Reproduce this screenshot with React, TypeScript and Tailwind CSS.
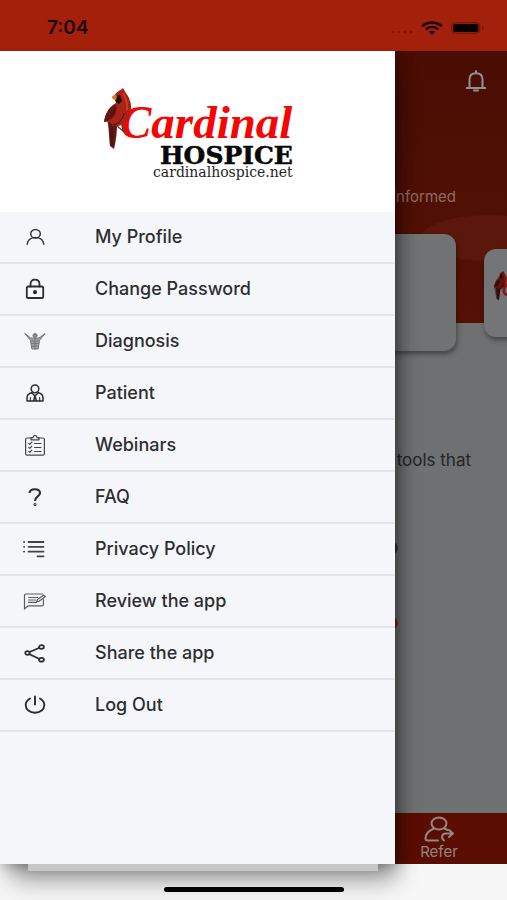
import type { ReactNode } from "react";

type IconProps = { children: ReactNode; width?: number; color?: string };

function Icon({ children, width = 1.5, color = "#2b2c2f" }: IconProps) {
  return (
    <svg
      aria-hidden="true"
      viewBox="0 0 24 24"
      className="size-6 shrink-0"
      fill="none"
      stroke={color}
      strokeWidth={width}
      strokeLinecap="round"
      strokeLinejoin="round"
    >
      {children}
    </svg>
  );
}

const menu: { label: string; icon: ReactNode }[] = [
  {
    label: "My Profile",
    icon: (
      <Icon width={1.4}>
        <ellipse cx="12.5" cy="8.8" rx="4.8" ry="4.2" />
        <path d="M4.2 19.2c.5-4.2 3.6-6.6 8.3-6.6s7.8 2.400 8.300 6.600" />
      </Icon>
    ),
  },
  {
    label: "Change Password",
    icon: (
      <Icon width={1.8}>
        <rect x="3.8" y="9.500" width="16.400" height="11.500" rx="1.600" />
        <path d="M7.500 9.500V7.200c0-2.900 1.800-4.600 4.500-4.600s4.500 1.700 4.500 4.600v2.300" />
        <circle cx="12" cy="15.200" r="1.200" fill="#2b2c2f" />
      </Icon>
    ),
  },
  {
    label: "Diagnosis",
    icon: (
      <Icon width={1} color="#77787c">
        <path d="M2 4.500l5.500 7 1.300 8.500h6.400l1.300-8.500 5.500-7-6 4.500H8z" fill="#a0a1a5" />
        <circle cx="12" cy="6.500" r="2" fill="#86878b" />
        <path d="M12 9v11M8.500 12h7M8.500 14.500h7M8.800 17h6.400" />
      </Icon>
    ),
  },
  {
    label: "Patient",
    icon: (
      <Icon width={1.500}>
        <ellipse cx="12" cy="7.800" rx="3.800" ry="3.900" />
        <path d="M9 11.500c-3.200.8-5 2.600-5 5.500v3h16v-3c0-2.900-1.800-4.700-5-5.500M9 12l3 3 3-3M12 15l-1.500 5M12 15l1.500 5" />
        <path d="M7.300 20v-3.500M16.700 20v-3.500" strokeWidth="1.100" />
      </Icon>
    ),
  },
  {
    label: "Webinars",
    icon: (
      <Icon width={1.200} color="#44454a">
        <path d="M8 5H4.200c-1 0-1.600.6-1.600 1.600v14c0 1 .6 1.600 1.600 1.600h15.600c1 0 1.600-.6 1.600-1.600v-14c0-1-.6-1.600-1.600-1.600H16" />
        <path d="M8 6.800V4.600h2c.2-1.500.9-2.200 2-2.200s1.800.7 2 2.200h2v2.200z" />
        <path d="M11.500 10.500h6.500M11.500 14.500h6.500M11.500 18.500h6.500M5.800 10.300l1 1 2-2.200M5.800 14.300l1 1 2-2.200M5.800 18.300l1 1 2-2.200" />
      </Icon>
    ),
  },
  {
    label: "FAQ",
    icon: (
      <Icon width={2.100}>
        <path d="M6.500 8C6.700 5.500 8.600 4.200 11.800 4.200S17 5.700 17 8c0 3.500-5 3.400-5 8" strokeLinecap="butt" />
        <circle cx="12" cy="19.500" r=".5" />
      </Icon>
    ),
  },
  {
    label: "Privacy Policy",
    icon: (
      <Icon width={1.800} color="#424247">
        <path d="M5.500 5h15M5.500 9.800h15M5.500 14.600h15M14.500 19.300h6" />
        <path d="M1 5h.2M1 9.800h.2M1 14.600h.2" />
      </Icon>
    ),
  },
  {
    label: "Review the app",
    icon: (
      <Icon width={1.200} color="#5c5d61">
        <path d="M19.500 5H2.800c-.9 0-1.300.5-1.300 1.300V20l3.600-3.200h14c.8 0 1.300-.5 1.300-1.300v-5" />
        <path d="M5.500 8.500h9M5.500 11h7M5.500 13.300h8M13.500 13l1-2.600L20.800 6l1.500 1.700-6.300 4.500z" />
      </Icon>
    ),
  },
  {
    label: "Share the app",
    icon: (
      <Icon width={1.800}>
        <path d="M6.500 11l9.500-4M6.500 13.200l9.500 4.600" />
        <ellipse cx="4.500" cy="12" rx="2.200" ry="1.800" />
        <ellipse cx="18.500" cy="6" rx="2.400" ry="1.900" />
        <ellipse cx="18.500" cy="18.800" rx="2.400" ry="1.900" />
      </Icon>
    ),
  },
  {
    label: "Log Out",
    icon: (
      <Icon width={1.900}>
        <path d="M12 3.500v8M7 5.500c-2.700 1.500-4.300 3.800-4.300 6.500 0 4.600 4 7.700 9.300 7.700s9.300-3.100 9.300-7.700c0-2.700-1.600-5-4.300-6.500" />
      </Icon>
    ),
  },
];

function Bird() {
  return (
    <g>
      <path d="M3 30c2 9 2 20 3 28l4 3c2-8 3-17 3-24l-2-8z" fill="#5f1712" />
      <path d="M19 0c-3 3-8 4-9 9l2 6C6 18 2 23 0 34c4-1 7 0 9 4 8 1 14-3 16-10 2-6 3-10 1-15-1-5-4-7-7-13z" fill="#a92214" />
      <path d="M0 34c1-9 5-14 12-18 2 8-2 16-12 18z" fill="#641711" />
      <path d="M3 32c4-3 7-7 8-12M9 37c5-1 10-5 11-12M8 39v18" stroke="#3a100d" strokeWidth="1" fill="none" />
      <path d="M19 5c2 5 5 8 4 17" stroke="#cf3a25" strokeWidth="2" fill="none" />
      <path d="M11 8l5-1 2 6-3 3c-3-1-4-4-4-8z" fill="#20100e" />
      <path d="M8 9c1-2 4-3 5-1l-1 4c-2 0-4-1-4-3z" fill="#d67920" />
      <path d="M13 38l6 5 4-1M18 36l1 7" stroke="#5a4238" strokeWidth="1.200" fill="none" />
    </g>
  );
}

function Logo() {
  return (
    <svg viewBox="0 0 196 96" className="h-24 w-[196px]" role="img" aria-label="Cardinal Hospice">
      <text x="20" y="52" fill="#f50505" fontSize="47" fontWeight="700" fontStyle="italic" fontFamily="'Liberation Serif', serif">
        Cardinal
      </text>
      <g transform="translate(4 2)">
        <Bird />
      </g>
      <text x="60" y="78" fill="#080808" stroke="#080808" strokeWidth=".5" fontSize="25" fontWeight="700" fontFamily="'DejaVu Serif', serif">
        HOSPICE
      </text>
      <text x="53" y="91" fill="#252525" fontSize="14" fontFamily="'DejaVu Serif', serif">
        cardinalhospice.net
      </text>
    </svg>
  );
}

function StatusBar() {
  return (
    <header className="flex h-[51px] items-center justify-between bg-[#a3200b] pr-[22px] pl-[47px] text-[#1d0502]">
      <time className="pt-1 text-[19px] leading-6 font-semibold">7:04</time>
      <div className="flex items-center gap-2 pt-1">
        <svg viewBox="0 0 22 4" className="mt-2 h-1 w-[22px]" fill="#74170a" aria-hidden="true">
          <circle cx="2" cy="2" r="1.200" />
          <circle cx="8" cy="2" r="1.200" />
          <circle cx="14" cy="2" r="1.200" />
          <circle cx="20" cy="2" r="1.200" />
        </svg>
        <svg viewBox="0 0 22 14" className="h-3.5 w-[22px]" fill="none" stroke="#120201" strokeWidth="2.400" aria-hidden="true">
          <path d="M1.200 5.200c5.500-5 14.100-5 19.600 0M4.800 8.300c3.500-3.200 8.900-3.200 12.400 0" />
          <path d="M8 10.800c1.800-1.500 4.200-1.500 6 0L11 13.500z" fill="#120201" stroke="none" />
        </svg>
        <svg viewBox="0 0 34 12" className="h-3 w-[34px]" aria-hidden="true">
          <rect x=".8" y=".8" width="28" height="10.400" rx="3" fill="none" stroke="#6c1307" strokeWidth="1" />
          <rect x="2.200" y="2" width="25.200" height="8" rx="1.500" fill="#090100" />
          <path d="M31 4v4c1.800-.8 1.800-3.200 0-4z" fill="#6c1307" />
        </svg>
      </div>
    </header>
  );
}

function HomePage() {
  return (
    <main className="col-start-1 row-start-1 flex min-w-0 flex-col overflow-hidden bg-[#6e7072]">
      <section className="relative flex h-[272px] flex-col items-end justify-between bg-linear-to-b from-[#490d03] to-[#561106] pb-[116px]">
        <svg viewBox="0 0 90 110" className="absolute right-0 bottom-0 h-[110px] w-[90px]" aria-hidden="true">
          <ellipse cx="72" cy="25" rx="68" ry="23" fill="#5b170c" />
        </svg>
        <button type="button" aria-label="Notifications" className="mt-[18px] mr-[19px]">
          <svg viewBox="0 0 24 24" className="size-6" fill="none" stroke="#96908d" strokeWidth="2" strokeLinejoin="round">
            <path d="M5.500 18.500v-8C5.500 6.500 8 4.200 12 4.200s6.500 2.300 6.500 6.300v8M2 19h20" />
            <path d="M12 4V2M10 21.500h4" strokeLinecap="round" />
          </svg>
        </button>
        <p className="pr-[51px] text-[15px] leading-5 text-[#8d6c65]">informed</p>
      </section>
      <div className="relative -mt-[89px] flex items-center">
        <div className="h-[117px] w-[90%] shrink-0 rounded-xl bg-[#707274] shadow-[1px_3px_5px_rgba(0,0,0,0.4)]" />
        <div className="ml-7 flex h-[88px] w-32 shrink-0 items-center rounded-xl bg-[#737577] pl-2.5 shadow-[1px_3px_5px_rgba(0,0,0,0.4)]">
          <svg viewBox="0 0 60 32" className="mb-3 h-8 w-[60px] shrink-0" aria-hidden="true">
            <path d="M19 12c-4-2-9 3-9 8 0 5 6 5 9 1" fill="none" stroke="#8c1015" strokeWidth="2.500" />
            <g transform="scale(.48)">
              <Bird />
              <path d="M0 34C2 18 10 14 10 9L19 0l7 13-3 18-10 8-3 22-5-3z" fill="#000" fillOpacity=".4" />
            </g>
          </svg>
        </div>
      </div>
      <p className="mt-[97px] pr-9 text-right text-[17px] leading-6 text-[#242527]">tools that</p>
      <div className="mt-[70px] flex flex-col items-end gap-[63px] pr-[109px]">
        <span className="size-3 rounded-full bg-[#333538]" />
        <span className="size-3 rounded-full bg-[#80252a]" />
      </div>
      <nav className="mt-auto flex h-[51px] justify-end bg-[#5a0d02] pr-9">
        <a href="#refer" className="flex w-16 flex-col items-center pt-[3px] text-[15px] leading-4 text-[#968681]">
          <svg viewBox="0 0 32 28" className="h-7 w-8" fill="none" stroke="#968681" strokeWidth="2" strokeLinecap="round" strokeLinejoin="round" aria-hidden="true">
            <ellipse cx="16" cy="7.500" rx="7.500" ry="6" />
            <path d="M10.500 12.800c-5 2-8 5.500-8 9.700 0 1.300.7 2 2 2H15M21.500 12.500l3 1.500" />
            <path d="M21 24.500c-3.500-2.500-2-7 2-7h6.500M26 14l4 3.500-4 3.500" />
          </svg>
          Refer
        </a>
      </nav>
    </main>
  );
}

function Drawer() {
  return (
    <aside className="z-10 col-start-1 row-start-1 w-[78%] bg-[#f5f6fa] shadow-[2px_0_14px_rgba(0,0,0,0.35),6px_20px_24px_-6px_rgba(0,0,0,0.45)]">
      <div className="flex h-[161px] items-center justify-center bg-white pt-1">
        <Logo />
      </div>
      <nav aria-label="Main menu">
        <ul>
          {menu.map(({ label, icon }) => (
            <li key={label} className="border-b-2 border-[#e4e5ea]">
              <button type="button" className="flex h-[50px] w-full items-center gap-12 pl-[23px] text-left text-lg font-medium text-[#2d2e31]">
                {icon}
                {label}
              </button>
            </li>
          ))}
        </ul>
      </nav>
    </aside>
  );
}

export default function App() {
  return (
    <div className="flex min-h-screen flex-col overflow-hidden bg-[#f7f7f7] font-['Inter','Liberation_Sans',sans-serif]">
      <div className="z-20">
        <StatusBar />
      </div>
      <div className="grid flex-1">
        <HomePage />
        <Drawer />
      </div>
      <footer className="z-20 flex h-9 flex-col justify-between pb-2">
        <div className="ml-7 h-[7px] w-[69%] bg-[#c6c6c6]" />
        <div className="h-[5px] w-[180px] self-center rounded-full bg-black" />
      </footer>
    </div>
  );
}
